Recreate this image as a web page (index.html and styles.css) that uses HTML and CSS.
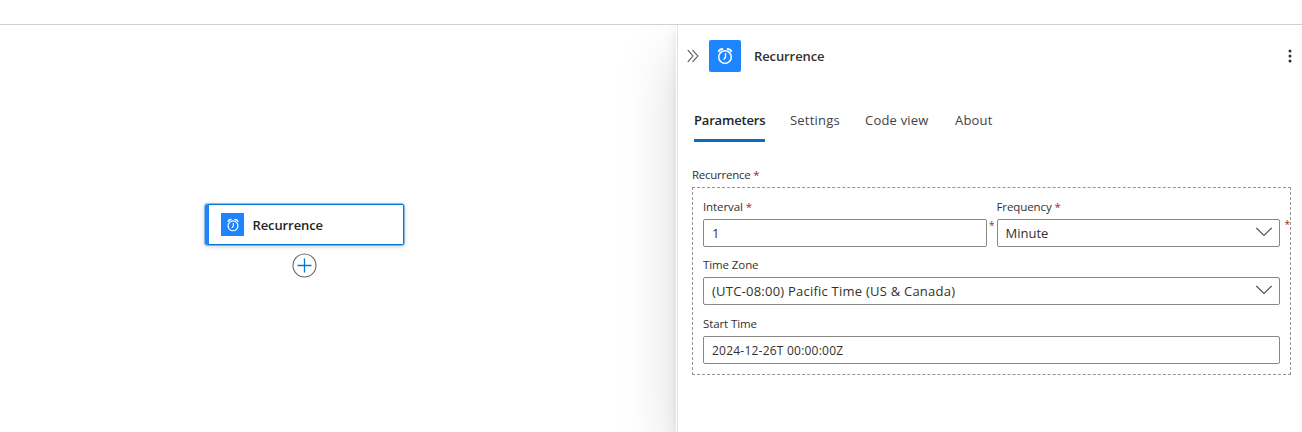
FILE: index.html
```html
<!DOCTYPE html>
<html lang="en">
<head>
<meta charset="utf-8">
<title>Recurrence</title>
<link rel="stylesheet" href="styles.css">
</head>
<body>
<svg class="defs" aria-hidden="true">
  <symbol id="alarm" viewBox="0 0 18 18">
    <g fill="none" stroke="#fff" stroke-linecap="round">
      <circle cx="9" cy="10.1" r="6.3" stroke-width="1.5"/>
      <path d="M9.5 6.7v3.5L8 12.2" stroke-width="1.4"/>
      <path d="M2.8 4.2C3.4 2.9 4.6 2.1 6.3 2M15.2 4.2C14.6 2.9 13.4 2.1 11.7 2" stroke-width="2"/>
    </g>
  </symbol>
  <symbol id="chevron" viewBox="0 0 18 10">
    <path d="M1.3 1 9 8.5 16.7 1" fill="none" stroke="#555" stroke-width="1.2"/>
  </symbol>
</svg>
<header class="topbar"></header>
<main class="designer">
  <section class="canvas">
    <div class="node">
      <span class="node-icon"><svg width="14" height="14"><use href="#alarm"/></svg></span>
      <span class="node-title">Recurrence</span>
    </div>
    <svg class="add" viewBox="0 0 26 26" fill="none">
      <circle cx="13.5" cy="13.5" r="11.5" fill="#fff" stroke="#666" stroke-width="1.1"/>
      <path d="M13.5 6.5v14M6.5 13.5h14" stroke="#0078d4" stroke-width="1.3"/>
    </svg>
  </section>
  <aside class="panel">
    <div class="panel-header">
      <svg class="collapse" viewBox="0 0 12 14"><path d="M.8 1.2 6 7 .8 12.8M5.6 1.2 10.8 7l-5.2 5.8" fill="none" stroke="#555" stroke-width="1.1"/></svg>
      <span class="panel-icon"><svg width="18" height="18"><use href="#alarm"/></svg></span>
      <span class="panel-title">Recurrence</span>
      <svg class="more" viewBox="0 0 4 14" fill="#323130"><circle cx="2" cy="2" r="1.5"/><circle cx="2" cy="7" r="1.5"/><circle cx="2" cy="12" r="1.5"/></svg>
    </div>
    <nav class="tabs">
      <span class="tab tab-active">Parameters</span>
      <span class="tab tab-settings">Settings</span>
      <span class="tab tab-code">Code view</span>
      <span class="tab tab-about">About</span>
    </nav>
    <div class="form">
      <div class="label label-group">Recurrence <i class="req">*</i></div>
      <div class="group">
        <div class="row">
          <div class="field">
            <div class="label">Interval <i class="req">*</i></div>
            <div class="input">1<i class="mark">*</i></div>
          </div>
          <div class="field">
            <div class="label">Frequency <i class="req">*</i></div>
            <div class="input"><span>Minute</span><svg class="chev"><use href="#chevron"/></svg><i class="mark mark-end">*</i></div>
          </div>
        </div>
        <div class="field field-zone">
          <div class="label">Time Zone</div>
          <div class="input"><span class="zone">(UTC-08:00) Pacific Time (US &amp; Canada)</span><svg class="chev"><use href="#chevron"/></svg></div>
        </div>
        <div class="field">
          <div class="label">Start Time</div>
          <div class="input"><span class="date">2024-12-26T 00:00:00Z</span></div>
        </div>
      </div>
    </div>
  </aside>
</main>
</body>
</html>
```
FILE: styles.css
```css
* { box-sizing: border-box; }
body {
  margin: 0;
  height: 432px;
  overflow: hidden;
  background: #fff;
  color: #323130;
  font-family: "Open Sans", "Noto Sans", sans-serif;
}
.defs { position: absolute; width: 0; height: 0; }
.topbar { height: 25px; border-bottom: 1px solid #d2d0ce; }
.designer { display: flex; height: 407px; overflow: hidden; }
.canvas { position: relative; flex: 0 0 676px; }
.node {
  position: absolute;
  left: 205px;
  top: 179px;
  width: 199px;
  height: 41px;
  display: flex;
  align-items: center;
  padding-left: 12px;
  border: 1px solid #0078d4;
  border-left: 4px solid #1f85ff;
  border-radius: 2px;
  outline: 1px solid rgba(0, 120, 212, .4);
  outline-offset: 0;
  box-shadow: 0 1px 5px rgba(0, 0, 0, .25);
  background: #fff;
}
.node-icon, .panel-icon {
  display: flex;
  align-items: center;
  justify-content: center;
  background: #1f85ff;
}
.node-icon { width: 23px; height: 23px; margin-right: 8.5px; }
.node-title { font-size: 13px; font-weight: 600; letter-spacing: -.1px; color: #242424; }
.add { position: absolute; left: 291px; top: 227px; width: 26px; height: 26px; }
.panel {
  position: relative;
  flex: 1;
  border-left: 1px solid #fff;
  background: #fff;
  box-shadow: 0 25.6px 57.6px rgba(0, 0, 0, .15), 0 4.8px 12px rgba(0, 0, 0, .08), inset 1px 0 #e1e1e1;
}
.panel-header { display: flex; align-items: center; height: 32px; margin: 15px 10px 0; }
.collapse { width: 12px; height: 14px; margin-right: 10px; }
.panel-icon { width: 32px; height: 32px; border-radius: 2px; margin-right: 13px; }
.panel-title { font-size: 13px; font-weight: 600; letter-spacing: -.1px; flex: 1; }
.more { width: 4px; height: 14px; }
.tabs { display: flex; gap: 25px; margin: 38px 0 0 17px; }
.tab { height: 32px; line-height: 20px; font-size: 13px; letter-spacing: .2px; color: #424242; white-space: nowrap; }
.tab-active {
  width: 71px;
  font-weight: 600;
  letter-spacing: -.18px;
  color: #242424;
  background: linear-gradient(#0f6cbd, #0f6cbd) bottom / 100% 3px no-repeat;
}
.tab-settings { width: 50px; }
.tab-code { width: 65px; }
.form { margin: 25px 11px 0 15px; }
.label { height: 20px; line-height: 16px; font-size: 11.5px; letter-spacing: -.1px; white-space: nowrap; }
.label-group { letter-spacing: -.25px; }
.req, .mark { color: #a4262c; font-style: normal; }
.group { height: 188px; padding: 11px 10px 0; border: 1px dashed #979593; }
.row { display: flex; gap: 10px; margin-bottom: 10px; }
.row .field { flex: 1; }
.field-zone { margin-bottom: 11px; }
.input {
  position: relative;
  display: flex;
  align-items: center;
  justify-content: space-between;
  height: 28px;
  padding: 0 6px 0 8px;
  border: 1px solid #8a8886;
  border-radius: 2px;
  font-size: 13px;
}
.chev { width: 18px; height: 10px; margin-top: -2px; }
.mark { position: absolute; right: -9px; top: -3px; font-size: 10px; line-height: 16px; }
.mark-end { right: -11px; top: -4px; }
.zone { letter-spacing: .23px; }
.date { font-size: 12px; letter-spacing: .22px; }
```
